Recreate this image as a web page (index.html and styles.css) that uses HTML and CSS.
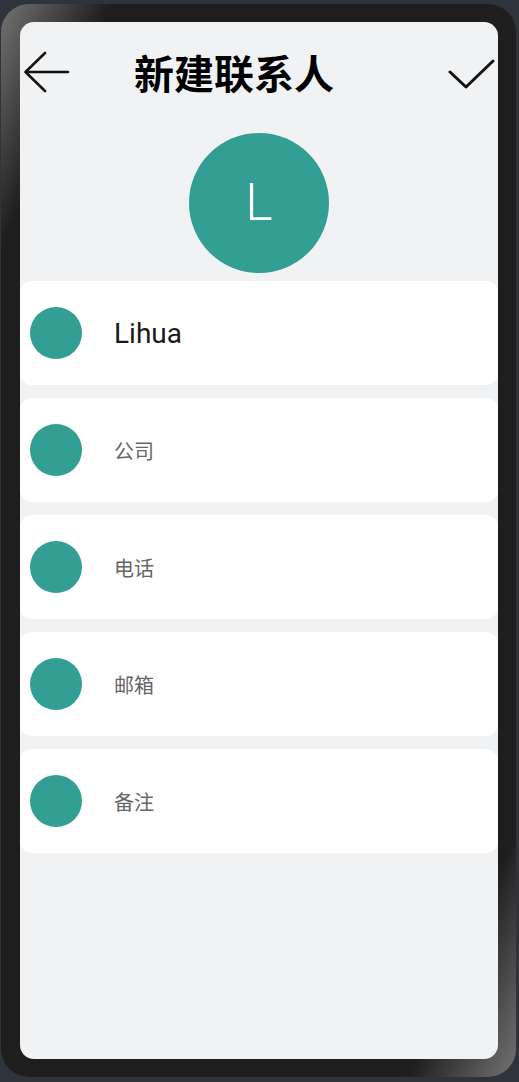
FILE: index.html
```html
<!DOCTYPE html>
<html lang="zh-CN">
<head>
<meta charset="utf-8">
<title>新建联系人</title>
<link rel="stylesheet" href="styles.css">
</head>
<body>
<div class="device">
  <div class="screen">
    <header class="header">
      <svg class="icon-back" width="46" height="44" viewBox="0 0 46 44">
        <path d="M21 3 L1.5 22 L21 41 M1.5 22 L44 22" fill="none" stroke="#111" stroke-width="2.6" stroke-linecap="round" stroke-linejoin="round"/>
      </svg>
      <h1 class="title">新建联系人</h1>
      <svg class="icon-check" width="48" height="32" viewBox="0 0 48 32">
        <path d="M2 15 L18 30 L45 4" fill="none" stroke="#111" stroke-width="3" stroke-linecap="round" stroke-linejoin="round"/>
      </svg>
    </header>
    <div class="avatar-wrap">
      <div class="avatar">L</div>
    </div>
    <div class="list">
      <div class="row"><span class="dot"></span><span class="value">Lihua</span></div>
      <div class="row"><span class="dot"></span><span class="label">公司</span></div>
      <div class="row"><span class="dot"></span><span class="label">电话</span></div>
      <div class="row"><span class="dot"></span><span class="label">邮箱</span></div>
      <div class="row"><span class="dot"></span><span class="label">备注</span></div>
    </div>
  </div>
</div>
</body>
</html>
```

FILE: styles.css
```css
* { box-sizing: border-box; }
html, body { margin: 0; padding: 0; }
body {
  background: #2f333c;
  width: 519px;
  height: 1082px;
  overflow: hidden;
  font-family: "Noto Sans CJK SC", "Noto Sans", sans-serif;
}
.device {
  margin: 4px 3px 5px 1px;
  width: 515px;
  height: 1073px;
  border-radius: 28px;
  background: linear-gradient(114deg, #737373 0%, #1e1e1e 11%, #1e1e1e 89%, #737373 100%);
  padding: 18px 18px 18px 19px;
}
.screen {
  width: 478px;
  height: 1037px;
  background: #f1f2f4;
  border-radius: 14px;
  overflow: hidden;
  display: flex;
  flex-direction: column;
}
.header {
  height: 100px;
  display: flex;
  align-items: center;
  padding: 0 2px 0 4px;
}
.icon-back { display: block; flex: none; }
.icon-check { display: block; flex: none; margin-left: auto; margin-top: 2px; }
.title {
  margin: 0 0 0 64px;
  font-family: "Noto Sans CJK SC", sans-serif;
  font-weight: 700;
  font-size: 40px;
  line-height: 1;
  color: #000;
}
.avatar-wrap {
  display: flex;
  justify-content: center;
  padding-top: 11px;
}
.avatar {
  width: 140px;
  height: 140px;
  border-radius: 50%;
  background: #339f94;
  color: #fff;
  font-family: Roboto, "Noto Sans", sans-serif;
  font-weight: 300;
  font-size: 52px;
  display: flex;
  align-items: center;
  justify-content: center;
  padding-bottom: 2px;
}
.list {
  margin-top: 8px;
  display: flex;
  flex-direction: column;
  gap: 13px;
}
.row {
  height: 104px;
  background: #fff;
  border-radius: 12px;
  display: flex;
  align-items: center;
  padding-left: 10px;
}
.dot {
  width: 52px;
  height: 52px;
  border-radius: 50%;
  background: #339f94;
  flex: none;
}
.value {
  margin-left: 32px;
  font-family: Roboto, "Noto Sans", sans-serif;
  font-size: 28px;
  color: #1a1a1a;
}
.label {
  margin-left: 32px;
  font-size: 20px;
  color: #666;
}
```
